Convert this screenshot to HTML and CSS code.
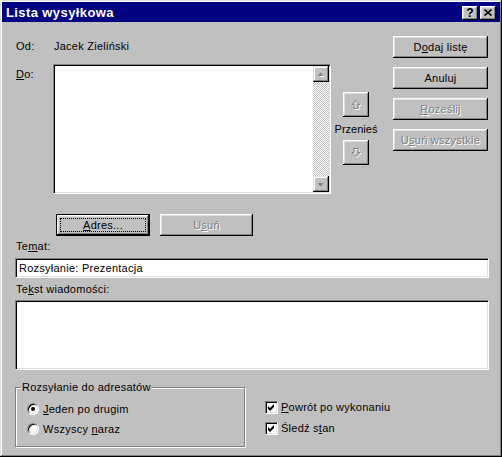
FILE: index.html
```html
<!DOCTYPE html>
<html lang="pl">
<head>
<meta charset="utf-8">
<title>Lista wysyłkowa</title>
<link rel="stylesheet" href="styles.css">
</head>
<body>
<div class="window">
  <div class="titlebar">
    <span class="title">Lista wysyłkowa</span>
    <div class="tb-buttons">
      <span class="tb-btn help">?</span>
      <span class="tb-btn close"><svg width="8" height="7" viewBox="0 0 8 7"><path d="M0.5 0.5 L7.5 6.5 M7.5 0.5 L0.5 6.5" stroke="#000" stroke-width="1.6" fill="none"/></svg></span>
    </div>
  </div>
  <div class="content">
    <div class="top">
      <div class="left">
        <div class="od"><span class="lbl">Od:</span><span>Jacek Zieliński</span></div>
        <div class="do">
          <span class="lbl"><u>D</u>o:</span>
          <div class="listbox">
            <div class="scrollbar">
              <span class="sb-btn"><svg width="8" height="5" viewBox="0 0 8 5"><path d="M1 5 L4 1.5 L7 5 Z" fill="#fff" transform="translate(1 0.5)"/><path d="M0.5 4 L3.5 0.5 L6.5 4 Z" fill="#808080"/></svg></span>
              <span class="sb-track"></span>
              <span class="sb-btn"><svg width="8" height="5" viewBox="0 0 8 5"><path d="M0.5 1 L3.5 4.5 L6.5 1 Z" fill="#808080"/></svg></span>
            </div>
          </div>
        </div>
        <div class="addr-row">
          <span class="btn default addr"><span class="focus"><u>A</u>dres...</span></span>
          <span class="btn disabled del">U<u>s</u>uń</span>
        </div>
      </div>
      <div class="move">
        <span class="btn mv"><svg width="11" height="10" viewBox="0 0 11 10"><path d="M6 1.5 L10 5.5 H8 V9.5 H4 V5.5 H2 Z" stroke="#fff" fill="none"/><path d="M5 0.5 L9 4.5 H7 V8.5 H3 V4.5 H1 Z" stroke="#808080" fill="none"/></svg></span>
        <span class="mv-label">Przenieś</span>
        <span class="btn mv"><svg width="11" height="10" viewBox="0 0 11 10"><path d="M6 9.5 L10 5.5 H8 V1.5 H4 V5.5 H2 Z" stroke="#fff" fill="none"/><path d="M5 8.5 L9 4.5 H7 V0.5 H3 V4.5 H1 Z" stroke="#808080" fill="none"/></svg></span>
      </div>
      <div class="right">
        <span class="btn rb">D<u>o</u>daj listę</span>
        <span class="btn rb">Anuluj</span>
        <span class="btn rb disabled"><u>R</u>oześlij</span>
        <span class="btn rb disabled">U<u>s</u>uń wszystkie</span>
      </div>
    </div>
    <div class="flabel">Te<u>m</u>at:</div>
    <div class="field subject">Rozsyłanie: Prezentacja</div>
    <div class="flabel msg-label">Te<u>k</u>st wiadomości:</div>
    <div class="field message"></div>
    <div class="bottom">
      <div class="group">
        <span class="legend">Rozsyłanie do adresatów</span>
        <div class="opt"><span class="radio checked"></span><span><u>J</u>eden po drugim</span></div>
        <div class="opt"><span class="radio"></span><span>Wszyscy <u>n</u>araz</span></div>
      </div>
      <div class="checks">
        <div class="opt"><span class="check"><svg width="9" height="9" viewBox="0 0 9 9"><path d="M1 3 L3 5 L7 1 L7 4 L3 8 L1 6 Z" fill="#000"/></svg></span><span><u>P</u>owrót po wykonaniu</span></div>
        <div class="opt"><span class="check"><svg width="9" height="9" viewBox="0 0 9 9"><path d="M1 3 L3 5 L7 1 L7 4 L3 8 L1 6 Z" fill="#000"/></svg></span><span>Śledź s<u>t</u>an</span></div>
      </div>
    </div>
  </div>
</div>
</body>
</html>
```

FILE: styles.css
```css
* { box-sizing: border-box; }
html, body { margin: 0; padding: 0; }
body {
  width: 502px;
  height: 457px;
  overflow: hidden;
  background: #c0c0c0;
  font-family: "Liberation Sans", Arial, sans-serif;
  font-size: 11px;
  line-height: 13px;
  letter-spacing: 0.25px;
  color: #000;
}
u { text-decoration: underline; text-underline-offset: 1px; }

.window {
  width: 502px;
  height: 457px;
  padding: 2px;
  background: #c0c0c0;
  box-shadow: inset -1px -1px #000, inset 1px 1px #dfdfdf, inset -2px -2px #808080, inset 2px 2px #fff;
  display: flex;
  flex-direction: column;
}

.titlebar {
  height: 20px;
  background: #000080;
  display: flex;
  align-items: center;
  justify-content: space-between;
  padding: 1px 4px 0 4px;
}
.title { color: #fff; font-weight: bold; font-size: 13px; line-height: 16px; letter-spacing: 0.4px; }
.tb-buttons { display: flex; gap: 2px; }
.tb-btn {
  width: 16px;
  height: 14px;
  background: #c0c0c0;
  box-shadow: inset -1px -1px #000, inset 1px 1px #fff, inset -2px -2px #808080, inset 2px 2px #dfdfdf;
  display: flex;
  align-items: center;
  justify-content: center;
  font-weight: bold;
  font-size: 12px;
  line-height: 12px;
  letter-spacing: 0;
}
.tb-btn svg { display: block; }

.content {
  padding: 14px 0 0 13px;
  display: flex;
  flex-direction: column;
  align-items: flex-start;
}

.top { display: flex; }
.left { width: 316px; display: flex; flex-direction: column; }
.od { margin-top: 4px; display: flex; padding-left: 1px; }
.lbl { width: 38px; flex: none; }
.do { margin-top: 11px; display: flex; padding-left: 1px; }
.do .lbl { width: 37px; margin-top: 4px; }

.listbox {
  width: 278px;
  height: 130px;
  background: #fff;
  border: 1px solid;
  border-color: #808080 #fff #fff #808080;
  box-shadow: inset 1px 1px #000, inset -1px -1px #dfdfdf;
  padding: 1px;
  display: flex;
  justify-content: flex-end;
}
.scrollbar { width: 16px; display: flex; flex-direction: column; }
.sb-btn {
  width: 16px;
  height: 16px;
  flex: none;
  background: #c0c0c0;
  box-shadow: inset -1px -1px #000, inset 1px 1px #dfdfdf, inset -2px -2px #808080, inset 2px 2px #fff;
  display: flex;
  align-items: center;
  justify-content: center;
}
.sb-btn svg { display: block; }
.sb-track {
  flex: 1;
  background-color: #fff;
  background-image: repeating-conic-gradient(#c0c0c0 0 25%, #fff 0 50%);
  background-size: 2px 2px;
}

.btn {
  height: 22px;
  background: #c0c0c0;
  box-shadow: inset -1px -1px #000, inset 1px 1px #fff, inset -2px -2px #808080, inset 2px 2px #dfdfdf;
  display: flex;
  align-items: center;
  justify-content: center;
  white-space: nowrap;
}
.btn.disabled { color: #808080; text-shadow: 1px 1px #fff; }
.btn.default {
  border: 1px solid #000;
  box-shadow: inset -1px -1px #000, inset 1px 1px #fff, inset -2px -2px #808080, inset 2px 2px #dfdfdf;
  padding: 3px;
}
.focus {
  flex: 1;
  align-self: stretch;
  border: 1px dotted #000;
  display: flex;
  align-items: center;
  justify-content: center;
}

.addr-row { margin-top: 20px; padding-left: 41px; display: flex; gap: 10px; }
.addr { width: 94px; }
.del { width: 93px; }

.move {
  margin-left: 12px;
  width: 26px;
  padding-top: 56px;
  display: flex;
  flex-direction: column;
  align-items: center;
}
.mv { width: 26px; height: 25px; }
.mv svg { display: block; }
.mv-label { margin-top: 6px; margin-bottom: 4px; width: 46px; text-align: center; letter-spacing: 0; }

.right {
  margin-left: 24px;
  width: 95px;
  display: flex;
  flex-direction: column;
  gap: 9px;
}
.rb { width: 95px; height: 22px; }

.flabel { margin-top: 4px; padding-left: 1px; }
.msg-label { margin-top: 5px; }
.field {
  width: 474px;
  background: #fff;
  border: 1px solid;
  border-color: #808080 #fff #fff #808080;
  box-shadow: inset 1px 1px #000, inset -1px -1px #dfdfdf;
}
.subject { margin-top: 5px; height: 20px; padding: 0 3px; line-height: 18px; }
.message { margin-top: 4px; height: 70px; }

.bottom { display: flex; margin-top: 17px; }
.group {
  width: 230px;
  height: 60px;
  border: 1px solid #808080;
  box-shadow: inset 1px 1px #fff, 1px 1px #fff;
  padding: 0 0 0 11px;
  display: flex;
  flex-direction: column;
  align-items: flex-start;
}
.legend {
  margin: -7px 0 5px -6px;
  padding: 0 1px;
  background: #c0c0c0;
}
.opt { display: flex; align-items: center; height: 20px; gap: 4px; }
.radio {
  width: 12px;
  height: 12px;
  flex: none;
  border-radius: 50%;
  background: #fff;
  border: 1px solid;
  border-color: #808080 #fff #fff #808080;
  box-shadow: inset 1px 1px #000, inset -1px -1px #dfdfdf;
  display: flex;
  align-items: center;
  justify-content: center;
}
.radio.checked::after {
  content: "";
  width: 4px;
  height: 4px;
  border-radius: 50%;
  background: #000;
}

.checks {
  margin-left: 20px;
  padding-top: 10px;
  display: flex;
  flex-direction: column;
}
.checks .opt { height: 21px; gap: 3px; }
.check {
  width: 13px;
  height: 13px;
  flex: none;
  background: #fff;
  border: 1px solid;
  border-color: #808080 #fff #fff #808080;
  box-shadow: inset 1px 1px #000, inset -1px -1px #dfdfdf;
  padding: 1px;
  display: flex;
  align-items: center;
  justify-content: center;
}
.check svg { display: block; }
```
